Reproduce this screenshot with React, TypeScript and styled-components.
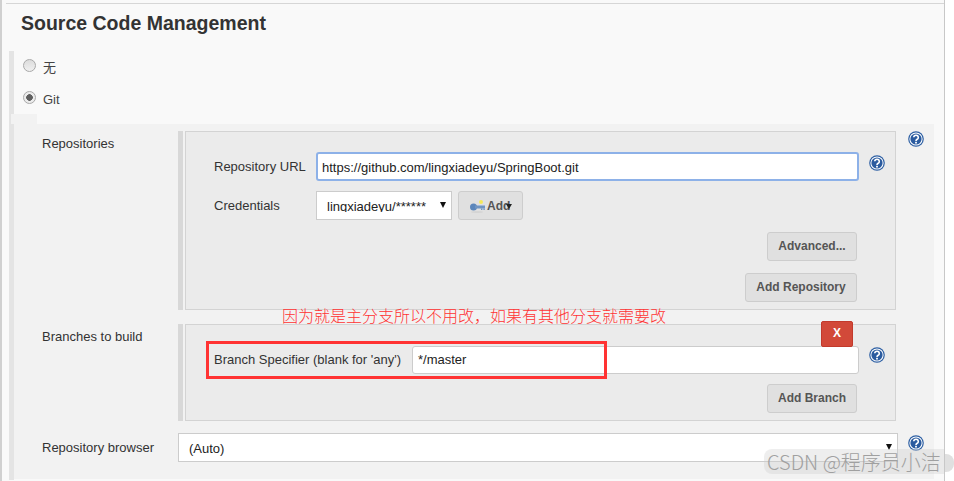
import React from "react";
import styled, { createGlobalStyle } from "styled-components";

const Global = createGlobalStyle`
  html, body { margin: 0; padding: 0; background: #fff; }
  * { box-sizing: border-box; }
  body { font-family: "Liberation Sans", Arial, "Noto Sans CJK SC", sans-serif; color: #333; }
`;

const Frame = styled.div`
  position: relative;
  width: 945px;
  height: 481px;
  overflow: hidden;
  background: #f9f9f9;
  border-left: 2px solid #d0d0d0;
  border-right: 1px solid #c8c8c8;
  padding-top: 3px;
`;
const TopRule = styled.div`
  height: 1px;
  margin-left: 4px;
  background: #d6d6d6;
`;
const Title = styled.h1`
  margin: 0;
  padding: 7px 0 0 19px;
  height: 48px;
  font-size: 19.5px;
  line-height: 24px;
  font-weight: 700;
  color: #333;
`;
const Section = styled.section`
  margin-left: 7px;
  border-left: 5px solid #e4e4e4;
  height: 429px;
`;
const RadioRow = styled.label`
  display: flex;
  align-items: center;
  gap: 7px;
  height: 32px;
  padding-left: 9px;
  font-size: 13px;
  color: #444;
`;
const RadioLabel = styled.span<{ $up: number }>`
  margin-top: ${(p) => -p.$up}px;
`;
const RadioList = styled.div`
  height: 72px;
  margin-top: -1px;
  margin-bottom: 1px;
`;
const RadioDot = styled.span<{ $on?: boolean }>`
  width: 13px;
  height: 13px;
  border-radius: 50%;
  border: 1px solid #a9a9a9;
  background: ${(p) => (p.$on ? "radial-gradient(circle, #5f5f5f 0 3px, #ececec 3.6px)" : "linear-gradient(#dcdcdc, #f0f0f0)")};
  margin-top: -3px;
`;
const Panel = styled.div`
  position: relative;
  width: 920px;
  height: 355px;
  background: #f2f2f2;
  padding: 7px 0 0 28px;
  display: flex;
  flex-direction: column;
  &::before {
    content: "";
    position: absolute;
    left: -3px;
    top: -10px;
    width: 26px;
    height: 10px;
    background: #f2f2f2;
  }
`;
const FormRow = styled.div<{ $gap?: number }>`
  display: grid;
  grid-template-columns: 136px 720px 36px;
  margin-bottom: ${(p) => p.$gap ?? 0}px;
`;
const RowLabel = styled.div<{ $top?: number }>`
  font-size: 13px;
  line-height: 16px;
  padding-top: ${(p) => p.$top ?? 5}px;
  color: #333;
`;
const Block = styled.div`
  width: 718px;
  border-left: 5px solid #d8d8d8;
  padding-left: 2px;
`;
const Box = styled.div<{ $h: number; $top: number }>`
  position: relative;
  height: ${(p) => p.$h}px;
  background: #ebebeb;
  border: 1px solid #d3d3d3;
  padding: ${(p) => p.$top}px 10px 0 28px;
`;
const Field = styled.div<{ $mb?: number }>`
  display: flex;
  align-items: center;
  margin-bottom: ${(p) => p.$mb ?? 10}px;
`;
const FieldLabel = styled.div<{ $w: number; $up?: number }>`
  width: ${(p) => p.$w}px;
  flex: none;
  font-size: 13px;
  color: #333;
  padding-bottom: ${(p) => p.$up ?? 0}px;
`;
const Input = styled.div<{ $focus?: boolean }>`
  flex: 1;
  height: ${(p) => (p.$focus ? 29 : 28)}px;
  line-height: ${(p) => (p.$focus ? 27 : 25)}px;
  padding-left: ${(p) => (p.$focus ? 4 : 5)}px;
  background: #fff;
  border: ${(p) => (p.$focus ? "2px solid #8db1e8" : "1px solid #ccc")};
  border-radius: 3px;
  font-size: 13px;
  color: #222;
`;
const Select = styled.div<{ $w: number; $pad: number; $lh?: number }>`
  position: relative;
  width: ${(p) => p.$w}px;
  height: 29px;
  flex: none;
  background: #fff;
  border: 1px solid #ccc;
  padding-left: ${(p) => p.$pad}px;
  font-size: 13px;
  line-height: ${(p) => p.$lh ?? 29}px;
  color: #222;
  &::after {
    content: "";
    position: absolute;
    right: 5px;
    top: 10px;
    border-left: 3.5px solid transparent;
    border-right: 3.5px solid transparent;
    border-top: 6px solid #111;
  }
`;
const ClippedValue = styled.span`
  display: block;
  height: 20px;
  overflow: hidden;
`;
const Button = styled.button<{ $w: number }>`
  display: inline-flex;
  align-items: center;
  justify-content: center;
  width: ${(p) => p.$w}px;
  height: 29px;
  padding: 0 0 2px;
  flex: none;
  background: #e0e0e0;
  border: 1px solid #cdcdcd;
  border-radius: 3px;
  font-family: inherit;
  font-size: 12px;
  font-weight: 700;
  color: #555;
`;
const AddButton = styled(Button)`
  position: relative;
  margin-left: 6px;
  justify-content: flex-start;
  gap: 1px;
  padding: 0 0 0 11px;
  &::after {
    content: "";
    position: absolute;
    left: 47px;
    top: 12px;
    border-left: 3px solid transparent;
    border-right: 3px solid transparent;
    border-top: 5px solid #222;
  }
`;
const Actions = styled.div<{ $mb?: number }>`
  display: flex;
  justify-content: flex-end;
  padding-right: 28px;
  margin-bottom: ${(p) => p.$mb ?? 12}px;
`;
const DeleteButton = styled.button`
  position: absolute;
  right: 42px;
  top: -4px;
  width: 32px;
  height: 26px;
  padding: 0 0 2px;
  background: #d24939;
  border: 1px solid #c23a2c;
  border-radius: 2px;
  color: #fff;
  font-family: inherit;
  font-size: 12px;
  font-weight: 700;
`;
const HelpWrap = styled.span<{ $ml?: number; $mt?: number }>`
  display: inline-flex;
  flex: none;
  width: 16px;
  height: 16px;
  margin-left: ${(p) => p.$ml ?? 0}px;
  margin-top: ${(p) => p.$mt ?? 0}px;
`;
const Note = styled.div`
  position: absolute;
  left: 280px;
  top: 303px;
  font-family: "Noto Sans CJK SC", sans-serif;
  font-size: 16px;
  font-weight: 300;
  line-height: 24px;
  color: #f33;
  white-space: nowrap;
`;
const Highlight = styled.div`
  position: absolute;
  left: 204px;
  top: 341px;
  width: 401px;
  height: 38px;
  border: 3px solid #f33;
`;
const Watermark = styled.div`
  position: absolute;
  left: 762px;
  top: 449px;
  width: 181px;
  height: 25px;
  padding-left: 3px;
  border-radius: 8px 0 0 8px;
  background: rgba(205, 205, 205, 0.35);
  font-family: "Noto Sans CJK SC", sans-serif;
  font-size: 20px;
  font-weight: 300;
  line-height: 25px;
  color: #a0a0a0;
  white-space: pre;
  overflow: visible;
`;
const Outside = styled.div`
  position: absolute;
  left: 945px;
  top: 454px;
  width: 9px;
  height: 18px;
  background: #e0e0e0;
  border-radius: 0 8px 8px 0;
`;

const Help = ({ ml, mt }: { ml?: number; mt?: number }) => (
  <HelpWrap $ml={ml} $mt={mt}>
    <svg width="16" height="16" viewBox="0 0 16 16">
      <circle cx="8" cy="8" r="7.8" fill="#2d5fa3" />
      <circle cx="8" cy="8" r="6.6" fill="#fff" />
      <circle cx="8" cy="8" r="5.6" fill="#2b5b9f" />
      <path d="M5.7 6.3a2.3 2.2 0 1 1 3.5 2c-.8.5-1.2.8-1.2 1.6" fill="none" stroke="#fff" strokeWidth="1.6" />
      <rect x="7.1" y="10.8" width="1.8" height="1.7" fill="#fff" />
    </svg>
  </HelpWrap>
);

const KeyIcon = () => (
  <svg width="16" height="16" viewBox="0 0 16 16">
    <circle cx="11" cy="4" r="2" fill="#f5e85a" />
    <ellipse cx="7" cy="14" rx="6" ry="1" fill="#d4d4d4" />
    <circle cx="3.5" cy="9" r="3.5" fill="#5b86bb" />
    <rect x="5" y="7.5" width="10" height="3" fill="#6f94c2" />
    <rect x="11" y="10.5" width="1.4" height="1.5" fill="#6f94c2" />
    <rect x="13.4" y="10.5" width="1.4" height="1.5" fill="#6f94c2" />
  </svg>
);

export default function App() {
  return (
    <>
      <Global />
      <Frame>
        <TopRule />
        <Title>Source Code Management</Title>
        <Section>
          <RadioList>
            <RadioRow><RadioDot /><RadioLabel $up={1}>无</RadioLabel></RadioRow>
            <RadioRow><RadioDot $on /><RadioLabel $up={0}>Git</RadioLabel></RadioRow>
          </RadioList>
          <Panel>
            <FormRow $gap={14}>
              <RowLabel>Repositories</RowLabel>
              <Block>
                <Box $h={179} $top={20}>
                  <Field>
                    <FieldLabel $w={102}>Repository URL</FieldLabel>
                    <Input $focus>https://github.com/lingxiadeyu/SpringBoot.git</Input>
                    <Help ml={10} mt={-7} />
                  </Field>
                  <Field $mb={12}>
                    <FieldLabel $w={102}>Credentials</FieldLabel>
                    <Select $w={136} $pad={10}><ClippedValue>lingxiadeyu/******</ClippedValue></Select>
                    <AddButton $w={65}><KeyIcon />Add</AddButton>
                  </Field>
                  <Actions><Button $w={90}>Advanced...</Button></Actions>
                  <Actions><Button $w={112}>Add Repository</Button></Actions>
                </Box>
              </Block>
              <Help ml={10} mt={0} />
            </FormRow>
            <FormRow $gap={12}>
              <RowLabel>Branches to build</RowLabel>
              <Block>
                <Box $h={97} $top={21}>
                  <DeleteButton>X</DeleteButton>
                  <Field>
                    <FieldLabel $w={198} $up={2}>Branch Specifier (blank for 'any')</FieldLabel>
                    <Input>*/master</Input>
                    <Help ml={10} mt={-10} />
                  </Field>
                  <Actions><Button $w={90}>Add Branch</Button></Actions>
                </Box>
              </Block>
            </FormRow>
            <FormRow>
              <RowLabel $top={7}>Repository browser</RowLabel>
              <Select $w={720} $pad={10} $lh={30}>(Auto)</Select>
              <Help ml={10} mt={2} />
            </FormRow>
          </Panel>
        </Section>
        <Note>因为就是主分支所以不用改，如果有其他分支就需要改</Note>
        <Highlight />
        <Watermark>CSDN @程序员小洁</Watermark>
      </Frame>
      <Outside />
    </>
  );
}
